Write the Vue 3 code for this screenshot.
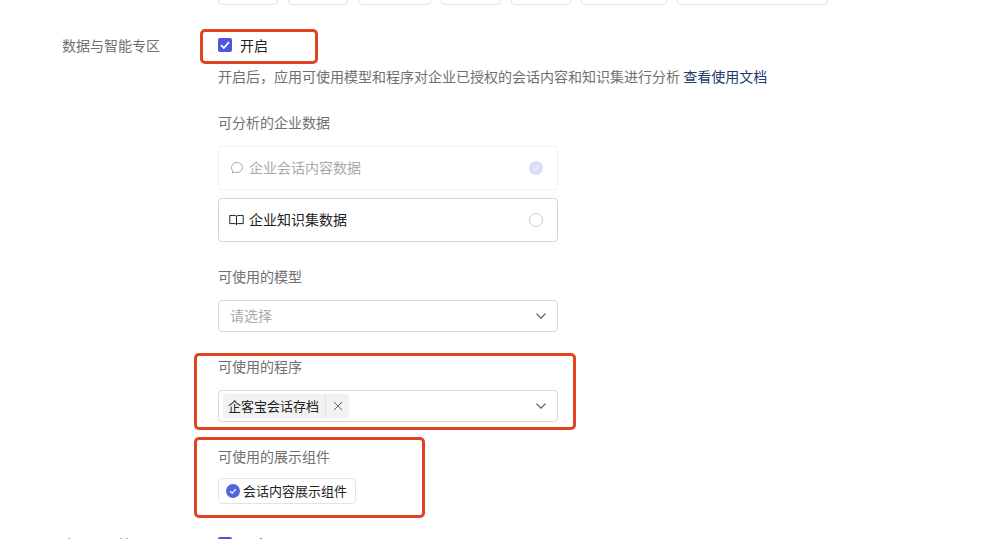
<script setup>
const topOptions = [60, 60, 73, 60, 60, 86, 151]

const dataOptions = [
  { id: 'chat', label: '企业会话内容数据', disabled: true },
  { id: 'kb', label: '企业知识集数据', disabled: false }
]

const highlights = [
  { id: 'open', cls: 'mark-open' },
  { id: 'program', cls: 'mark-program' },
  { id: 'widget', cls: 'mark-widget' }
]
</script>

<template>
  <div class="page">
    <div class="top-row">
      <div v-for="(w, i) in topOptions" :key="i" class="top-box" :style="{ width: w + 'px' }"></div>
    </div>

    <div class="form-row first-row">
      <div class="row-label">数据与智能专区</div>
      <div class="row-body">
        <label class="check-line">
          <span class="check">
            <svg width="12" height="12" viewBox="0 0 12 12"><path d="M2 6.200 4.800 9 10 3.200" fill="none" stroke="#fff" stroke-width="1.800" /></svg>
          </span>
          <span>开启</span>
        </label>
        <p class="hint">开启后，应用可使用模型和程序对企业已授权的会话内容和知识集进行分析 <a class="doc-link">查看使用文档</a></p>

        <div class="section-title data-title">可分析的企业数据</div>
        <div class="option-list">
          <div v-for="opt in dataOptions" :key="opt.id" class="option" :class="{ disabled: opt.disabled }">
            <svg v-if="opt.id === 'chat'" class="option-icon" width="15" height="14" viewBox="0 0 15 14" fill="none" stroke="currentColor">
              <path d="M8 1.500c3 0 5.500 2.200 5.500 5s-2.500 5-5.500 5c-.9 0-1.700-.2-2.400-.5l-2.300 1 .4-2.200C2.900 8.900 2.500 7.700 2.500 6.500c0-2.800 2.500-5 5.500-5z" />
            </svg>
            <svg v-else class="option-icon" width="15" height="14" viewBox="0 0 15 14" fill="none" stroke="currentColor">
              <path d="M7.500 3C6.500 2.400 4 2.300 .8 2.500v8.100h5c.8 0 1.400.3 1.700.9.300-.6.900-.9 1.700-.9h5V2.500C11 2.300 8.500 2.400 7.500 3zM7.500 3v9" />
            </svg>
            <span class="option-text">{{ opt.label }}</span>
            <span v-if="opt.disabled" class="radio-on">
              <svg width="14" height="14" viewBox="0 0 14 14"><circle cx="7" cy="7" r="7" fill="#dcdef6" /><path d="M4.300 7.100 6.200 9 9.700 5.200" fill="none" stroke="#f4f4fd" stroke-width="1.200" /></svg>
            </span>
            <span v-else class="radio-off"></span>
          </div>
        </div>

        <div class="section-title model-title">可使用的模型</div>
        <div class="select">
          <span class="placeholder">请选择</span>
          <svg class="chevron" width="12" height="8" viewBox="0 0 12 8"><path d="M1.500 1.700 6 6.200l4.500-4.500" fill="none" stroke="#555" stroke-width="1.200" /></svg>
        </div>

        <div class="section-title program-title">可使用的程序</div>
        <div class="select">
          <span class="tag">
            <span class="tag-text">企客宝会话存档</span>
            <span class="tag-close">
              <svg width="10" height="10" viewBox="0 0 10 10"><path d="M.8.8l8.400 8.400M9.200.8.8 9.200" stroke="#666" stroke-width="1" /></svg>
            </span>
          </span>
          <svg class="chevron" width="12" height="8" viewBox="0 0 12 8"><path d="M1.500 1.700 6 6.200l4.500-4.500" fill="none" stroke="#555" stroke-width="1.200" /></svg>
        </div>

        <div class="section-title widget-title">可使用的展示组件</div>
        <div class="widget-chip">
          <svg width="14" height="14" viewBox="0 0 14 14"><circle cx="7" cy="7" r="7" fill="#4e68dc" /><path d="M4.100 7.100 6.200 9.100 9.900 5.200" fill="none" stroke="#fff" stroke-width="1.200" /></svg>
          <span>会话内容展示组件</span>
        </div>
      </div>
    </div>

    <div class="form-row last-row">
      <div class="row-label">应用可见性</div>
      <div class="row-body">
        <label class="check-line">
          <span class="check"></span>
          <span>开启</span>
        </label>
      </div>
    </div>

    <div v-for="m in highlights" :key="m.id" class="mark" :class="m.cls"></div>
  </div>
</template>

<style>
html, body {
  margin: 0;
  background: #fff;
}
</style>

<style scoped>
.page {
  position: relative;
  width: 998px;
  height: 539px;
  overflow: hidden;
  background: #fff;
  font-family: "Noto Sans CJK SC", "Noto Sans", sans-serif;
  font-size: 14px;
  line-height: 20px;
  color: #222;
}

.top-row {
  display: flex;
  gap: 10px;
  margin-top: -23px;
  padding-left: 218px;
}

.top-box {
  height: 28px;
  box-sizing: border-box;
  border: 1px solid #e2e2e2;
  border-radius: 4px;
}

.form-row {
  display: flex;
}

.first-row {
  margin-top: 30px;
}

.last-row {
  margin-top: 30px;
}

.row-label {
  width: 156px;
  padding-left: 62px;
  color: #707070;
  flex-shrink: 0;
}

.row-body {
  width: 340px;
}

.check-line {
  display: flex;
  align-items: center;
  gap: 8px;
  height: 20px;
}

.check {
  width: 14px;
  height: 14px;
  border-radius: 2px;
  background: #4c55dc;
  display: flex;
  align-items: center;
  justify-content: center;
}

.hint {
  margin: 11px 0 0;
  white-space: nowrap;
  color: #707070;
}

.doc-link {
  color: #20386e;
}

.section-title {
  color: #707070;
}

.data-title {
  margin-top: 26px;
}

.option-list {
  margin-top: 14px;
  display: flex;
  flex-direction: column;
  gap: 8px;
}

.option {
  height: 44px;
  box-sizing: border-box;
  border: 1px solid #d4d4d4;
  border-radius: 4px;
  display: flex;
  align-items: center;
  padding: 0 14px 0 10px;
  color: #222;
}

.option.disabled {
  border-color: #f1f1f1;
  color: #aaa;
}

.option-icon {
  flex-shrink: 0;
}

.option-text {
  margin-left: 5px;
  margin-bottom: 2px;
  flex: 1;
}

.radio-on {
  display: flex;
}

.radio-off {
  width: 14px;
  height: 14px;
  box-sizing: border-box;
  border: 1px solid #ccc;
  border-radius: 50%;
}

.model-title {
  margin-top: 24px;
}

.select {
  margin-top: 14px;
  height: 32px;
  box-sizing: border-box;
  border: 1px solid #d9d9d9;
  border-radius: 4px;
  display: flex;
  align-items: center;
  justify-content: space-between;
  padding: 0 10px 0 11px;
}

.placeholder {
  margin-bottom: 2px;
  color: #aaa;
}

.program-title {
  margin-top: 24px;
}

.program-title + .select {
  padding-left: 4px;
}

.tag {
  display: flex;
  height: 24px;
  background: #f2f2f2;
  border-radius: 2px;
  align-items: center;
  font-size: 13px;
}

.tag-text {
  padding: 0 6px 0 5px;
  line-height: 24px;
  border-right: 1px solid #e2e2e2;
}

.tag-close {
  width: 23px;
  display: flex;
  align-items: center;
  justify-content: center;
}

.widget-title {
  margin-top: 24px;
}

.widget-chip {
  margin-top: 12px;
  width: 138px;
  height: 26px;
  box-sizing: border-box;
  border: 1px solid #e4e4e4;
  border-radius: 4px;
  display: flex;
  align-items: center;
  gap: 3px;
  padding-left: 7px;
  font-size: 13px;
}

/* red annotation boxes drawn on the screenshot */
.mark {
  position: absolute;
  box-sizing: border-box;
  border: 3px solid #e0441f;
  border-radius: 5px;
}

.mark-open {
  left: 200px;
  top: 29px;
  width: 118px;
  height: 35px;
}

.mark-program {
  left: 194px;
  top: 353px;
  width: 382px;
  height: 77px;
}

.mark-widget {
  left: 194px;
  top: 437px;
  width: 231px;
  height: 81px;
}
</style>
